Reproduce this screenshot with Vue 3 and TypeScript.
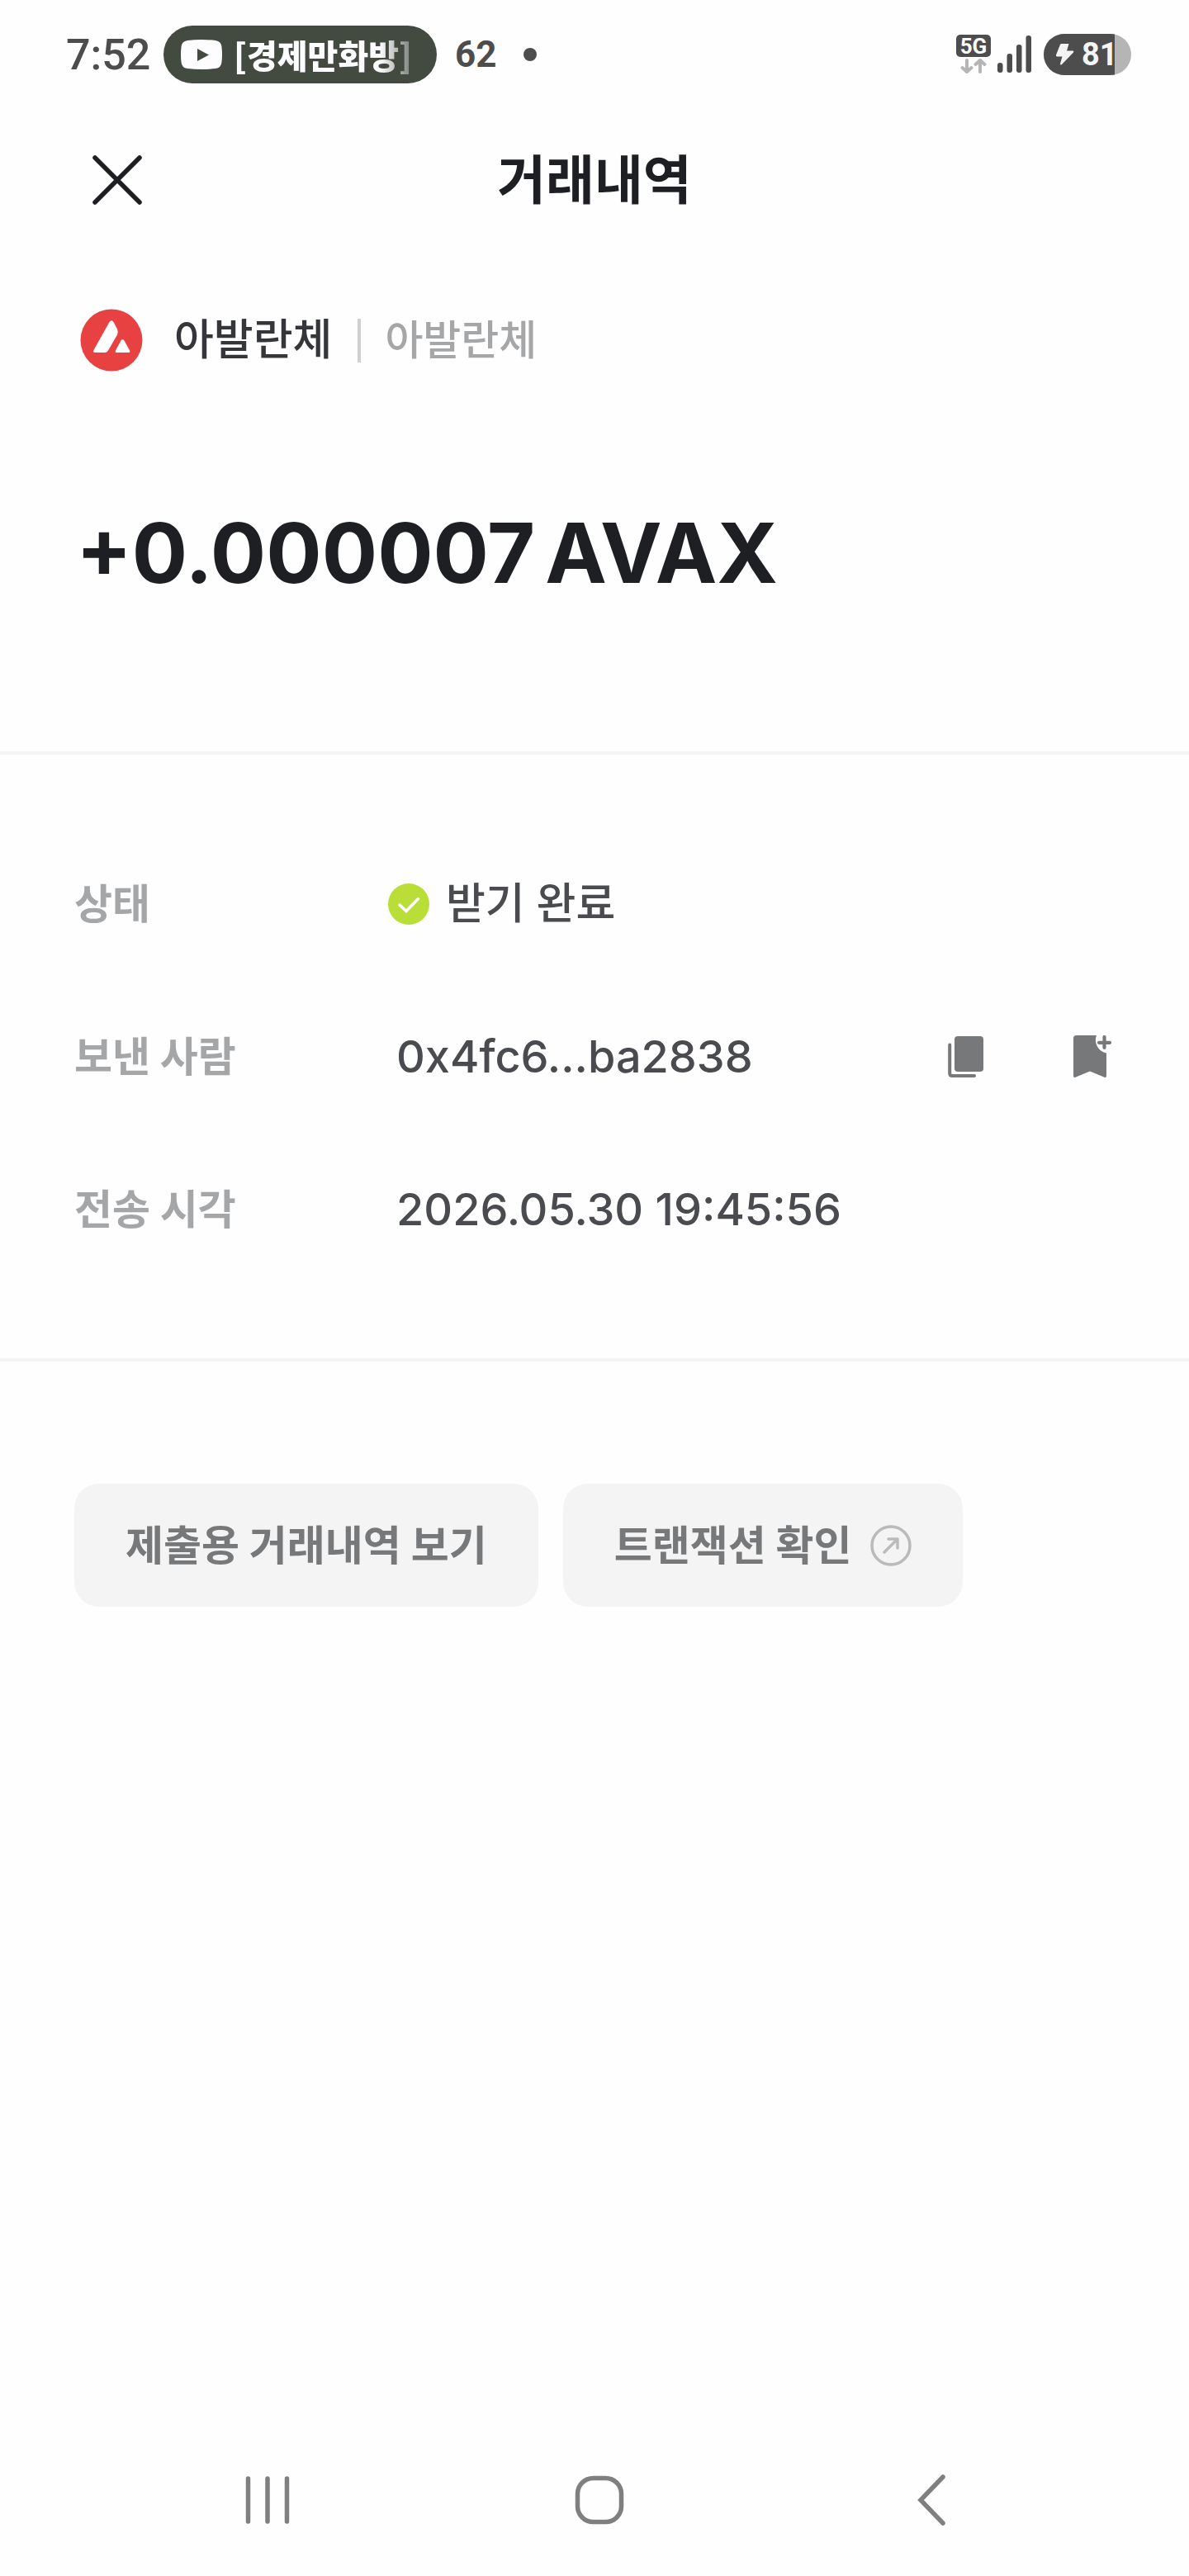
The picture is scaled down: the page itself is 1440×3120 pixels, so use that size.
<script setup lang="ts">
interface Detail {
  id: string
  label: string
  value: string
  done?: boolean
  actions?: boolean
}

const details: Detail[] = [
  { id: 'status', label: '상태', value: '받기 완료', done: true },
  { id: 'sender', label: '보낸 사람', value: '0x4fc6...ba2838', actions: true },
  { id: 'time', label: '전송 시각', value: '2026.05.30 19:45:56' },
]

const battery = 81
</script>

<template>
  <div class="screen">
    <div class="status-bar">
      <span class="clock">7:52</span>
      <div class="media-pill">
        <svg class="play" width="50" height="36" viewBox="0 0 50 36" aria-hidden="true">
          <path d="M8 1Q25 -1 42 1Q49 2 49.500 9Q50.500 18 49.500 27Q49 34 42 35Q25 37 8 35Q1 34 .5 27Q-.5 18 .5 9Q1 2 8 1Z" fill="#fdfcff" />
          <path d="M20 11L34 18.500L20 26Z" fill="#434a3f" />
        </svg>
        <span class="media-title">[경제만화방]</span>
      </div>
      <span class="count">62</span>
      <span class="dot"></span>
      <div class="indicators">
        <div class="network">
          <span class="network-badge">5G</span>
          <svg width="32" height="20" viewBox="0 0 32 20" fill="none" stroke="#b5b5b5" stroke-width="4" stroke-linecap="round" stroke-linejoin="round" aria-hidden="true">
            <path d="M8 3V17M2.500 12L8 17L13.500 12M24 17V3M18.500 8L24 3L29.500 8" />
          </svg>
        </div>
        <svg class="signal" width="42" height="46" viewBox="0 0 42 46" fill="#4d4d4d" aria-hidden="true">
          <rect x="0" y="33" width="6.500" height="12" rx="3" />
          <rect x="11.500" y="22" width="6.500" height="23" rx="3" />
          <rect x="23" y="11" width="6.500" height="34" rx="3" />
          <rect x="34.500" y="0" width="6.500" height="45" rx="3" />
        </svg>
        <div class="battery">
          <div class="battery-level" :style="{ width: battery + '%' }"></div>
          <svg width="24" height="28" viewBox="0 0 24 28" aria-hidden="true">
            <path d="M7.500 1H16.500L14 9.500H21.500Q23 10 22 11.500L8 26Q6 27.500 6 25L8.500 16.500H2Q.5 16 1 14.500L6 2Q6.500 1 7.500 1Z" fill="#f4f4f4" />
          </svg>
          <span class="battery-value">{{ battery }}</span>
        </div>
      </div>
    </div>

    <header class="header">
      <button class="icon-button" type="button" aria-label="닫기">
        <svg width="60" height="60" viewBox="0 0 60 60" fill="none" stroke="#1e1f23" stroke-width="5.500" stroke-linecap="round" aria-hidden="true">
          <path d="M3 3L57 57M57 3L3 57" />
        </svg>
      </button>
      <h1>거래내역</h1>
    </header>

    <main>
      <section class="summary">
        <div class="coin">
          <svg width="76" height="76" viewBox="0 0 76 76" aria-hidden="true">
            <circle cx="38" cy="38" r="37.500" fill="#e84142" />
            <path d="M35.500 16Q38 12.500 40.500 16L45 24.500Q46.500 28 45 31.500L34 50.500Q32.500 53 29.500 53H18Q15 53 16.500 50Z" fill="#fff" />
            <path d="M49.500 38.500Q51.500 35.500 53.500 38.500L60 50.500Q61 53 58.500 53H44.500Q42 53 43 50.500Z" fill="#fff" />
          </svg>
          <span class="coin-name">아발란체</span>
          <span class="coin-network">아발란체</span>
        </div>
        <p class="amount"><span>+0.000007</span><span>AVAX</span></p>
      </section>

      <dl class="details">
        <div v-for="row in details" :key="row.id" class="detail">
          <dt>{{ row.label }}</dt>
          <dd :class="{ done: row.done }">
            <svg v-if="row.done" width="50" height="50" viewBox="0 0 50 50" aria-hidden="true">
              <circle cx="25" cy="25" r="25" fill="#b9de38" />
              <path d="M14 26L22 33.500L36.500 18.500" fill="none" stroke="#fff" stroke-width="3.500" stroke-linecap="round" />
            </svg>
            <span class="value">{{ row.value }}</span>
            <span v-if="row.actions" class="row-actions">
              <button class="icon-button" type="button" aria-label="주소 복사">
                <svg width="44" height="52" viewBox="0 0 44 52" aria-hidden="true">
                  <rect x="8" y="1" width="35" height="43" rx="4" fill="#77787a" />
                  <path d="M2.200 11.500V46Q2.200 49 5.200 49H32" fill="none" stroke="#77787a" stroke-width="4" stroke-linecap="round" />
                </svg>
              </button>
              <button class="icon-button" type="button" aria-label="주소록에 추가">
                <svg width="46" height="52" viewBox="0 0 46 52" aria-hidden="true">
                  <path d="M3.500 0H28A16 16 0 0 0 40 21.500V49Q40 52 37 50.500L20 43.500L3 50.500Q0 52 0 49V3.500Q0 0 3.500 0Z" fill="#77787a" />
                  <path d="M37.500 2V15M31 8.800H44" fill="none" stroke="#77787a" stroke-width="4.200" stroke-linecap="round" />
                </svg>
              </button>
            </span>
          </dd>
        </div>
      </dl>

      <div class="buttons">
        <button class="chip" type="button">제출용 거래내역 보기</button>
        <button class="chip" type="button">
          트랜잭션 확인
          <svg width="50" height="50" viewBox="0 0 50 50" fill="none" stroke="#b9babb" stroke-width="3.500" stroke-linecap="round" stroke-linejoin="round" aria-hidden="true">
            <circle cx="25" cy="25" r="23" />
            <path d="M17 33L33 17M22 17H33V28" />
          </svg>
        </button>
      </div>
    </main>

    <nav class="nav-bar">
      <button class="icon-button" type="button" aria-label="최근 앱">
        <svg width="54" height="60" viewBox="0 0 54 60" fill="none" stroke="#7f7f7f" stroke-width="5.500" stroke-linecap="round" aria-hidden="true">
          <path d="M3.500 4V56M27 4V56M50.500 4V56" />
        </svg>
      </button>
      <button class="icon-button" type="button" aria-label="홈">
        <svg width="60" height="60" viewBox="0 0 60 60" fill="none" stroke="#7f7f7f" stroke-width="5.500" aria-hidden="true">
          <rect x="3.500" y="3.500" width="53" height="53" rx="19" />
        </svg>
      </button>
      <button class="icon-button" type="button" aria-label="뒤로">
        <svg width="34" height="62" viewBox="0 0 34 62" fill="none" stroke="#7f7f7f" stroke-width="5.500" stroke-linecap="round" stroke-linejoin="miter" aria-hidden="true">
          <path d="M31 3L4 31L31 59" />
        </svg>
      </button>
    </nav>
  </div>
</template>

<style>
body {
  background: #fefefe;
}
</style>

<style scoped>
.screen {
  display: flex;
  flex-direction: column;
  min-height: 100vh;
  background: #fefefe;
  color: #1e1f23;
  font-family: Inter, "Noto Sans CJK KR", sans-serif;
}

svg {
  display: block;
  flex: none;
}

.icon-button {
  display: block;
  padding: 0;
  border: 0;
  background: none;
}

.status-bar {
  display: flex;
  align-items: center;
  height: 132px;
  padding: 0 70px 0 80px;
  color: #4d4d4d;
  font-family: Roboto, "Noto Sans CJK KR", sans-serif;
  white-space: nowrap;
}

.clock {
  width: 118px;
  font-size: 52px;
  font-weight: 500;
}

.media-pill {
  display: flex;
  align-items: center;
  gap: 14px;
  box-sizing: border-box;
  width: 331px;
  height: 70px;
  padding-left: 21px;
  border-radius: 35px;
  background: #434a3f;
}

.media-title {
  color: #fdfcff;
  font-family: "Noto Sans CJK KR", sans-serif;
  font-size: 40px;
  font-weight: 900;
  line-height: 60px;
  mask-image: linear-gradient(to right, #000 82%, rgba(0, 0, 0, 0.3) 100%);
}

.count {
  margin-left: 22px;
  font-size: 44px;
  font-weight: 700;
}

.dot {
  width: 16px;
  height: 16px;
  margin-left: 32px;
  border-radius: 50%;
  background: #4d4d4d;
}

.indicators {
  display: flex;
  align-items: center;
  margin-left: auto;
}

.network {
  display: flex;
  flex-direction: column;
  align-items: center;
  gap: 1px;
  margin-right: 8px;
}

.network-badge {
  width: 42px;
  height: 27px;
  border-radius: 5px;
  background: #4d4d4d;
  color: #fefefe;
  font-size: 26px;
  font-weight: 700;
  line-height: 28px;
  text-align: center;
}

.battery {
  position: relative;
  display: flex;
  align-items: center;
  gap: 8px;
  box-sizing: border-box;
  width: 106px;
  height: 50px;
  margin-left: 14px;
  padding-left: 14px;
  border-radius: 25px;
  background: #b5b5b5;
  overflow: hidden;
}

.battery > * {
  position: relative;
}

.battery > .battery-level {
  position: absolute;
  inset: 0 auto 0 0;
  background: #4d4d4d;
}

.battery-value {
  color: #f4f4f4;
  font-size: 38px;
  font-weight: 700;
}

.header {
  display: grid;
  grid-template-columns: 1fr auto 1fr;
  align-items: center;
  height: 171px;
  padding: 0 112px;
}

h1 {
  margin: 0;
  font-size: 64px;
  font-weight: 700;
  line-height: 80px;
}

.summary {
  padding: 64px 92px 180px;
  border-bottom: 4px solid #f4f4f4;
}

.coin {
  display: flex;
  align-items: center;
  height: 90px;
  padding-left: 5px;
  font-size: 52px;
  font-weight: 500;
  line-height: 64px;
}

.coin-name {
  margin-left: 38px;
  color: #35363a;
}

.coin-network {
  display: flex;
  align-items: center;
  color: #a5a6a8;
  font-size: 50px;
}

.coin-network::before {
  width: 4px;
  height: 53px;
  margin: 0 29px 0 31px;
  background: #d0d0d1;
  content: "";
}

.amount {
  display: flex;
  gap: 12px;
  margin: 153px 0 0;
  font-size: 100px;
  font-weight: 700;
  line-height: 120px;
}

.details {
  margin: 0;
  padding: 88px 90px;
  border-bottom: 4px solid #f4f4f4;
}

.detail {
  display: grid;
  grid-template-columns: 380px 1fr;
  align-items: center;
  height: 185px;
}

dt {
  color: #a5a6a8;
  font-size: 50px;
  font-weight: 700;
  line-height: 64px;
}

dd {
  display: flex;
  align-items: center;
  margin: 0;
  padding-left: 10px;
  color: #4a4b4f;
  font-size: 54px;
  font-weight: 500;
  line-height: 64px;
}

dd.done {
  gap: 20px;
  padding-left: 0;
  font-size: 52px;
}

.row-actions {
  display: flex;
  gap: 108px;
  margin-left: auto;
  padding-right: 4px;
}

.buttons {
  display: flex;
  gap: 30px;
  padding: 148px 90px;
}

.chip {
  display: flex;
  align-items: center;
  gap: 22px;
  height: 149px;
  padding: 0 62px;
  border: 0;
  border-radius: 30px;
  background: #f4f4f4;
  color: #77787a;
  font-family: inherit;
  font-size: 50px;
  font-weight: 700;
  line-height: 64px;
  white-space: nowrap;
}

.nav-bar {
  display: grid;
  grid-template-columns: repeat(3, 1fr);
  place-items: center;
  height: 185px;
  margin-top: auto;
  padding: 0 111px 0 123px;
}
</style>
